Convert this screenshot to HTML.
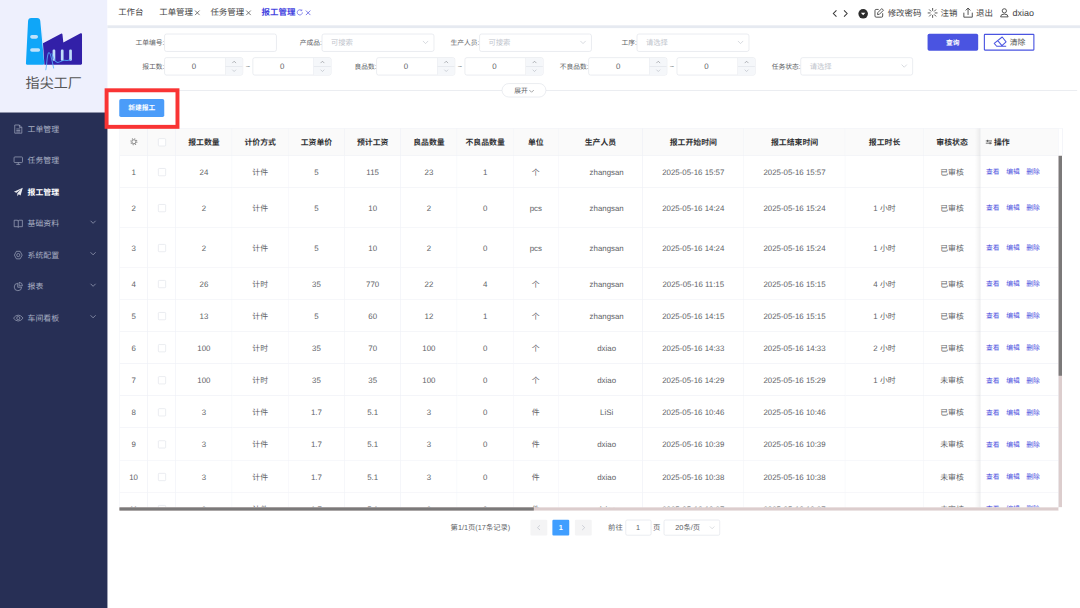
<!DOCTYPE html>
<html lang="zh-CN"><head><meta charset="utf-8"><title>报工管理</title>
<style>
html,body{margin:0;padding:0;width:1080px;height:608px;overflow:hidden;background:#fff}
body{font-family:"Liberation Sans","Noto Sans CJK SC",sans-serif}
#app{text-rendering:geometricPrecision;position:absolute;left:0;top:0;width:1920px;height:1081px;transform:scale(.5625);transform-origin:0 0;background:#fff;color:#606266;font-size:14px;overflow:hidden}
#app *{box-sizing:border-box}
.abs{position:absolute}
svg{display:block;overflow:visible}
/* sidebar */
.side{position:absolute;left:0;top:0;width:191px;height:1081px}
.menu{position:absolute;left:0;top:200px;width:191px;height:881px;background:#272f55}
.logo{position:absolute;left:0;top:0;width:191px;height:200px;background:#eef0fd}
.logo .nm{position:absolute;left:0;width:191px;top:131px;text-align:center;font-size:25px;line-height:36px;color:#555;letter-spacing:0}
.mi{position:absolute;left:0;width:191px;height:56px;line-height:56px;color:#a9afc4;font-size:14px}
.mi .ic{position:absolute;left:24px;top:21px;width:17px;height:17px;opacity:.9}
.mi .tx{position:absolute;left:49px;top:1px;white-space:nowrap}
.mi .ar{position:absolute;left:160px;top:23px;width:11px;height:8px}
.mi.on{color:#fff;font-weight:bold}
/* topbar */
.top{position:absolute;left:191px;top:0;width:1729px;height:45px;background:#fff}
.strip{position:absolute;left:191px;top:45px;width:1729px;height:5px;background:#e6eaf1}
.tab{position:absolute;top:0;height:45px;line-height:44px;font-size:15px;color:#444;white-space:nowrap}
.tab.on{color:#4545e0;font-weight:bold}
.tr{position:absolute;top:1px;height:45px;line-height:46px;font-size:15px;color:#444;white-space:nowrap}
/* form */
.lbl{position:absolute;width:80px;text-align:right;font-size:12px;color:#606266;line-height:32px;height:32px;white-space:nowrap}
.inp{position:absolute;height:32px;border:1px solid #dcdfe6;border-radius:4px;background:#fff;font-size:13px;line-height:30px;color:#c0c4cc}
.inp .ph{position:absolute;left:15px;top:0}
.inp .dn{position:absolute;right:9px;top:11px;width:11px;height:7px}
.num{position:absolute;height:32px;width:139.5px;border:1px solid #dcdfe6;border-radius:4px;background:#fff;font-size:14px;line-height:30px;color:#606266}
.num .v{position:absolute;left:0;top:0;width:103px;text-align:center}
.num .ct{position:absolute;right:0;top:0;width:31px;height:30px;border-left:1px solid #dcdfe6;background:#f5f7fa;border-radius:0 3px 3px 0}
.num .ct i{position:absolute;left:0;top:15px;width:30px;height:1px;background:#dcdfe6}
.num .ct svg{position:absolute;left:11px;width:8.5px;height:5px}
.til{position:absolute;font-size:13px;line-height:32px;color:#606266;width:18px;text-align:center}
.btn{position:absolute;border-radius:3px;text-align:center;white-space:nowrap}
/* table */
.tw{position:absolute;left:212px;top:228px;width:1678px;height:680px;overflow:hidden}
table{margin-left:1px;border-collapse:separate;border-spacing:0;table-layout:fixed;width:1669px;font-size:14px;color:#606266}
th,td{border-right:1px solid #ebeef5;border-bottom:1px solid #ebeef5;text-align:center;padding:0;overflow:hidden;white-space:nowrap}
th{height:49px;padding-bottom:2px;background:#fafafa;color:#303133;font-weight:bold;border-top:1px solid #ebeef5}
td{height:57px;background:#fff;padding-top:1px}
tr.r1 td{height:57px}
tr.h58 td{height:58px}
tr.tall td{height:71px}
.cb{display:inline-block;width:14px;height:14px;border:1px solid #dcdfe6;border-radius:2px;background:#fff;vertical-align:middle;position:relative;top:-1px}
td:nth-child(10){padding-left:22px}
th .cb{top:0}
td.op,th.op{text-align:left;padding-left:10px;font-size:12px}
th.op{font-size:14px;padding-left:9px}
td.op a{color:#4549dd;margin-right:11.7px}
.fx{position:absolute;left:1521px;top:0;width:10px;height:674px;background:linear-gradient(to right,rgba(0,0,0,0),rgba(0,0,0,.06))}
/* pager */
.pg{position:absolute;font-size:13px;color:#606266;line-height:28px;height:28px;white-space:nowrap}
.pb{position:absolute;top:924.4px;width:30px;height:28px;border-radius:2px;background:#f4f4f5;text-align:center;line-height:28px;font-size:13px;font-weight:bold}
</style></head><body>
<div id="app">

<!-- SIDEBAR -->
<div class="side">
 <div class="logo">
  <svg class="abs" style="left:40px;top:28px" width="112" height="100" viewBox="0 0 112 100">
   <path d="M40.5 87 L34 12 L36 40Z" fill="#8fd0fb" opacity=".6"/>
   <path d="M15.5 4 H26 Q31.2 4 31.6 9.5 L38.6 85 Q38.8 87 36.8 87 H8 Q6 87 6.1 85 L9.9 9.5 Q10.3 4 15.5 4Z" fill="#0fa6f8"/>
   <path d="M36.4 48.7 L68.4 31.8 Q70.5 31 71 33 L72.6 47.6 L103.2 31.3 Q105.7 30.3 105.8 33 V85 Q105.8 87 103.8 87 H39Z" fill="#3220a8"/>
   <rect x="13.6" y="34.3" width="14" height="6.4" rx="3.2" fill="#bfe2fb"/>
   <rect x="13.6" y="57.8" width="17.7" height="6.4" rx="3.2" fill="#bfe2fb"/>
   <rect x="53.5" y="60" width="4.8" height="20" rx="2" fill="#bfdcfa"/>
   <rect x="68.2" y="60" width="4.8" height="20" rx="2" fill="#bfdcfa"/>
   <rect x="83" y="60" width="4.8" height="20" rx="2" fill="#bfdcfa"/>
   <path d="M41.5 96 C43.5 86 43.5 70 46.2 66 C49.5 63 52 78 55.4 93 M52.3 67.5 C54.5 75 57.5 83 62.5 83 C67.5 83 70 78.5 75.5 79.3 C80 80 83 78.3 85 78" fill="none" stroke="#55b4ff" stroke-width="1.8" stroke-linecap="round" opacity=".8"/>
  </svg>
  <div class="nm">指尖工厂</div>
 </div>

 <div class="menu"></div>
 <div class="mi" style="top:200px"><svg class="ic" viewBox="0 0 17 17" fill="none" stroke="currentColor" stroke-width="1.3"><path d="M2.2 1.2h8.3l4.3 4.3v10.3h-12.6z M10.5 1.2v4.3h4.3 M5 8.3h7 M5 11h7 M5 13.6h7"/></svg><span class="tx">工单管理</span></div>
 <div class="mi" style="top:256px"><svg class="ic" viewBox="0 0 17 17" fill="none" stroke="currentColor" stroke-width="1.3"><rect x="1" y="2" width="15" height="10" rx="1.5"/><path d="M8.5 12v3 M5 15.3h7"/></svg><span class="tx">任务管理</span></div>
 <div class="mi on" style="top:312px"><svg class="ic" viewBox="0 0 17 17" fill="currentColor"><path d="M16.5 0.8 L0.8 7.8 L5.2 9.6 L13.5 3.6 L6.8 10.6 L6.8 15.8 L9.4 12.2 L12.6 14.6Z"/></svg><span class="tx">报工管理</span></div>
 <div class="mi" style="top:368px"><svg class="ic" viewBox="0 0 17 17" fill="none" stroke="currentColor" stroke-width="1.3"><path d="M1.2 2.5h5.3q2 0 2 2 q0-2 2-2h5.3v11.5h-5.3q-2 0-2 1.2 q0-1.2-2-1.2h-5.3z M8.5 4.5v10.5"/></svg><span class="tx">基础资料</span><svg class="ar" viewBox="0 0 11 8" fill="none" stroke="currentColor" stroke-width="1.2"><path d="M1 1.5l4.5 4.5l4.5-4.5"/></svg></div>
 <div class="mi" style="top:424px"><svg class="ic" viewBox="0 0 17 17" fill="none" stroke="currentColor" stroke-width="1.3"><path d="M5.2 1.8h6.6l3.6 6.7l-3.6 6.7h-6.6l-3.6-6.7z"/><circle cx="8.5" cy="8.5" r="2.8"/></svg><span class="tx">系统配置</span><svg class="ar" viewBox="0 0 11 8" fill="none" stroke="currentColor" stroke-width="1.2"><path d="M1 1.5l4.5 4.5l4.5-4.5"/></svg></div>
 <div class="mi" style="top:480px"><svg class="ic" viewBox="0 0 17 17" fill="none" stroke="currentColor" stroke-width="1.3"><path d="M7.5 2.6a6.6 6.6 0 1 0 7 7h-7z"/><path d="M10 1v6h6a6.2 6.2 0 0 0-6-6z"/></svg><span class="tx">报表</span><svg class="ar" viewBox="0 0 11 8" fill="none" stroke="currentColor" stroke-width="1.2"><path d="M1 1.5l4.5 4.5l4.5-4.5"/></svg></div>
 <div class="mi" style="top:536px"><svg class="ic" viewBox="0 0 17 17" fill="none" stroke="currentColor" stroke-width="1.3"><path d="M0 8.5q3.8-5.2 8.5-5.2t8.5 5.2q-3.8 5.2-8.5 5.2t-8.5-5.2z"/><circle cx="8.5" cy="8.5" r="2.8"/></svg><span class="tx">车间看板</span><svg class="ar" viewBox="0 0 11 8" fill="none" stroke="currentColor" stroke-width="1.2"><path d="M1 1.5l4.5 4.5l4.5-4.5"/></svg></div>
</div>

<!-- TOP BAR -->
<div class="top"></div><div class="strip"></div>
<div class="tab" style="left:210px">工作台</div>
<div class="tab" style="left:283px">工单管理</div><svg class="abs" style="left:346.0px;top:17.5px" width="9.6" height="9.6" viewBox="0 0 10 10" fill="none" stroke="#444" stroke-width="1.3"><path d="M.8 .8l8.4 8.4M9.2 .8l-8.4 8.4"/></svg>
<div class="tab" style="left:374px">任务管理</div><svg class="abs" style="left:436.59999999999997px;top:17.5px" width="9.6" height="9.6" viewBox="0 0 10 10" fill="none" stroke="#444" stroke-width="1.3"><path d="M.8 .8l8.4 8.4M9.2 .8l-8.4 8.4"/></svg>
<div class="tab on" style="left:465px">报工管理</div>
<svg class="abs" style="left:527px;top:16.2px" width="12" height="12" viewBox="0 0 12 12" fill="none" stroke="#4545e0" stroke-width="1.1"><path d="M10.6 6a4.6 4.6 0 1 1-1.6-3.5"/><path d="M9.6 .6v2.4h-2.4" stroke-width="1"/></svg><svg class="abs" style="left:543.0px;top:17.5px" width="9.6" height="9.6" viewBox="0 0 10 10" fill="none" stroke="#4545e0" stroke-width="1.3"><path d="M.8 .8l8.4 8.4M9.2 .8l-8.4 8.4"/></svg>

<svg class="abs" style="left:1479px;top:15.5px" width="32" height="16" viewBox="0 0 32 16" fill="none" stroke="#333" stroke-width="1.8"><path d="M8 2.5l-5.5 5.5l5.5 5.5 M21.5 2.5l5.5 5.5l-5.5 5.5"/></svg>
<svg class="abs" style="left:1525.5px;top:15.5px" width="17" height="17" viewBox="0 0 18 18"><circle cx="9" cy="9" r="9" fill="#2b2b2b"/><path d="M4.8 7h8.4l-4.2 4.6z" fill="#fff"/></svg>
<svg class="abs" style="left:1554px;top:14px" width="18" height="18" viewBox="0 0 18 18" fill="none" stroke="#444" stroke-width="1.6"><path d="M8 2.8h-4.5q-2 0-2 2v9.7q0 2 2 2h9.7q2 0 2-2v-5"/><path d="M13.6 1.2l3 3l-7.2 7.2l-3.4 .5l.5-3.4z"/></svg>
<div class="tr" style="left:1578px">修改密码</div>
<svg class="abs" style="left:1649px;top:14px" width="18" height="18" viewBox="0 0 18 18" fill="none" stroke="#444" stroke-width="1.6" stroke-linecap="round"><path d="M9 1v3.6 M9 13.4v3.6 M1 9h3.6 M13.4 9h3.6 M3.3 3.3l2.6 2.6 M12.1 12.1l2.6 2.6 M3.3 14.7l2.6-2.6 M12.1 5.9l2.6-2.6"/></svg>
<div class="tr" style="left:1672px">注销</div>
<svg class="abs" style="left:1712px;top:13px" width="18" height="19" viewBox="0 0 18 19" fill="none" stroke="#444" stroke-width="1.6"><path d="M1.5 9.5v8h15v-8 M9 13.5v-12 M4.8 5.5l4.2-4.2l4.2 4.2"/></svg>
<div class="tr" style="left:1735px">退出</div>
<svg class="abs" style="left:1777px;top:14px" width="17" height="18" viewBox="0 0 17 18" fill="none" stroke="#444" stroke-width="1.6"><circle cx="8.5" cy="5.3" r="3.8"/><path d="M1.8 16q0-5 6.7-5t6.7 5z"/></svg>
<div class="tr" style="left:1800px;font-size:16px">dxiao</div>

<!-- FORM -->
<div class="lbl" style="left:212.4px;top:59.5px">工单编号:</div><div class="inp" style="left:292.4px;top:59.5px;width:200px"></div>
<div class="lbl" style="left:492.4px;top:59.5px">产成品:</div><div class="inp" style="left:572.4px;top:59.5px;width:200px"><span class="ph">可搜索</span><svg class="dn" viewBox="0 0 11 7" fill="none" stroke="#c0c4cc" stroke-width="1.1"><path d="M.8 .8l4.7 4.7l4.7-4.7"/></svg></div>
<div class="lbl" style="left:772.4px;top:59.5px">生产人员:</div><div class="inp" style="left:852.4px;top:59.5px;width:200px"><span class="ph">可搜索</span><svg class="dn" viewBox="0 0 11 7" fill="none" stroke="#c0c4cc" stroke-width="1.1"><path d="M.8 .8l4.7 4.7l4.7-4.7"/></svg></div>
<div class="lbl" style="left:1052.4px;top:59.5px">工序:</div><div class="inp" style="left:1132.4px;top:59.5px;width:200px"><span class="ph">请选择</span><svg class="dn" viewBox="0 0 11 7" fill="none" stroke="#c0c4cc" stroke-width="1.1"><path d="M.8 .8l4.7 4.7l4.7-4.7"/></svg></div>

<div class="lbl" style="left:212.4px;top:101.7px">报工数:</div>
<div class="num" style="left:292.4px;top:101.7px"><span class="v">0</span><span class="ct"><i></i><svg style="top:5.5px" viewBox="0 0 10 6" fill="none" stroke="#85888e" stroke-width="1.3"><path d="M1 5l4-4l4 4"/></svg><svg style="top:20.5px" viewBox="0 0 10 6" fill="none" stroke="#b4b8c0" stroke-width="1.3"><path d="M1 1l4 4l4-4"/></svg></span></div>
<div class="til" style="left:431.5px;top:101.7px">~</div>
<div class="num" style="left:449.4px;top:101.7px"><span class="v">0</span><span class="ct"><i></i><svg style="top:5.5px" viewBox="0 0 10 6" fill="none" stroke="#85888e" stroke-width="1.3"><path d="M1 5l4-4l4 4"/></svg><svg style="top:20.5px" viewBox="0 0 10 6" fill="none" stroke="#b4b8c0" stroke-width="1.3"><path d="M1 1l4 4l4-4"/></svg></span></div>

<div class="lbl" style="left:589.4px;top:101.7px">良品数:</div>
<div class="num" style="left:669.4px;top:101.7px"><span class="v">0</span><span class="ct"><i></i><svg style="top:5.5px" viewBox="0 0 10 6" fill="none" stroke="#85888e" stroke-width="1.3"><path d="M1 5l4-4l4 4"/></svg><svg style="top:20.5px" viewBox="0 0 10 6" fill="none" stroke="#b4b8c0" stroke-width="1.3"><path d="M1 1l4 4l4-4"/></svg></span></div>
<div class="til" style="left:808.5px;top:101.7px">~</div>
<div class="num" style="left:826.4px;top:101.7px"><span class="v">0</span><span class="ct"><i></i><svg style="top:5.5px" viewBox="0 0 10 6" fill="none" stroke="#85888e" stroke-width="1.3"><path d="M1 5l4-4l4 4"/></svg><svg style="top:20.5px" viewBox="0 0 10 6" fill="none" stroke="#b4b8c0" stroke-width="1.3"><path d="M1 1l4 4l4-4"/></svg></span></div>

<div class="lbl" style="left:966.4px;top:101.7px">不良品数:</div>
<div class="num" style="left:1046.4px;top:101.7px"><span class="v">0</span><span class="ct"><i></i><svg style="top:5.5px" viewBox="0 0 10 6" fill="none" stroke="#85888e" stroke-width="1.3"><path d="M1 5l4-4l4 4"/></svg><svg style="top:20.5px" viewBox="0 0 10 6" fill="none" stroke="#b4b8c0" stroke-width="1.3"><path d="M1 1l4 4l4-4"/></svg></span></div>
<div class="til" style="left:1185.5px;top:101.7px">~</div>
<div class="num" style="left:1203.4px;top:101.7px"><span class="v">0</span><span class="ct"><i></i><svg style="top:5.5px" viewBox="0 0 10 6" fill="none" stroke="#85888e" stroke-width="1.3"><path d="M1 5l4-4l4 4"/></svg><svg style="top:20.5px" viewBox="0 0 10 6" fill="none" stroke="#b4b8c0" stroke-width="1.3"><path d="M1 1l4 4l4-4"/></svg></span></div>

<div class="lbl" style="left:1343.4px;top:101.7px">任务状态:</div><div class="inp" style="left:1423.4px;top:101.7px;width:200px"><span class="ph">请选择</span><svg class="dn" viewBox="0 0 11 7" fill="none" stroke="#c0c4cc" stroke-width="1.1"><path d="M.8 .8l4.7 4.7l4.7-4.7"/></svg></div>

<div class="btn" style="left:1649px;top:60px;width:90px;height:30px;background:#4a54e1;color:#fff;font-size:12px;font-weight:bold;line-height:32px">查询</div>
<div class="btn" style="left:1749px;top:60px;width:90px;height:30px;background:#fff;border:2px solid #4a54e1;border-radius:2px"><svg class="abs" style="left:-2px;top:-2px" width="90" height="30" viewBox="0 0 90 30" fill="none" stroke="#4a54e1" stroke-width="1.8" stroke-linejoin="round"><path d="M32.7 5.8L39.6 14.5L30.8 22.3H22.9L18.5 17Z M24.8 12.1L32.2 21 M22.9 22.4H39.8"/></svg><span class="abs" style="left:44px;top:-2px;font-size:14px;line-height:31px;color:#555">清除</span></div>

<!-- divider + expand -->
<div class="abs" style="left:212px;top:160px;width:1703px;height:1px;background:#dcdfe6"></div>
<div class="abs" style="left:892px;top:148px;width:79px;height:25px;border:1px solid #dcdfe6;border-radius:13px;background:#fff;font-size:12px;line-height:24px;color:#606266;padding-left:21px">展开<svg class="abs" style="left:46.5px;top:9.5px" width="10" height="6" viewBox="0 0 10 6" fill="none" stroke="#606266" stroke-width="1"><path d="M1 1l4 4l4-4"/></svg></div>

<!-- new button + highlight -->
<div class="btn" style="left:212px;top:176px;width:80px;height:32px;background:#4b9cf9;color:#fff;font-size:12px;font-weight:bold;line-height:32px">新建报工</div>

<!-- TABLE -->
<div class="tw">
<div style="height:674px;overflow:hidden">
<table>
<colgroup><col style="width:50px"><col style="width:50px"><col style="width:100px"><col style="width:100px"><col style="width:100px"><col style="width:100px"><col style="width:100px"><col style="width:100px"><col style="width:80px"><col style="width:150px"><col style="width:180px"><col style="width:180px"><col style="width:140px"><col style="width:100px"><col style="width:139px"></colgroup>
<thead><tr><th><svg style="margin:0 auto" width="14" height="14" viewBox="0 0 14 14" fill="none" stroke="#777"><circle cx="7" cy="7" r="3.6" stroke-width="1.5"/><circle cx="7" cy="7" r="5.4" stroke-width="1.8" stroke-dasharray="2.1 2.14" stroke="#8a8a8a"/></svg></th><th><span class="cb"></span></th><th>报工数量</th><th>计价方式</th><th>工资单价</th><th>预计工资</th><th>良品数量</th><th>不良品数量</th><th>单位</th><th>生产人员</th><th>报工开始时间</th><th>报工结束时间</th><th>报工时长</th><th>审核状态</th><th class="op"><svg style="display:inline-block;vertical-align:-1px;margin-right:3px" width="12" height="11" viewBox="0 0 11 11" preserveAspectRatio="none" fill="none" stroke="#333" stroke-width="1.2"><path d="M0.5 3.5h10 M0.5 7.5h10 M3.5 1.5v4 M7.5 5.5v4"/></svg>操作</th></tr></thead>
<tbody>
<tr class="r1"><td>1</td><td><span class="cb"></span></td><td>24</td><td>计件</td><td>5</td><td>115</td><td>23</td><td>1</td><td>个</td><td>zhangsan</td><td>2025-05-16 15:57</td><td>2025-05-16 15:57</td><td></td><td>已审核</td><td class="op"><a>查看</a><a>编辑</a><a>删除</a></td></tr>
<tr class="tall"><td>2</td><td><span class="cb"></span></td><td>2</td><td>计件</td><td>5</td><td>10</td><td>2</td><td>0</td><td>pcs</td><td>zhangsan</td><td>2025-05-16 14:24</td><td>2025-05-16 15:24</td><td>1 小时</td><td>已审核</td><td class="op"><a>查看</a><a>编辑</a><a>删除</a></td></tr>
<tr class="tall"><td>3</td><td><span class="cb"></span></td><td>2</td><td>计件</td><td>5</td><td>10</td><td>2</td><td>0</td><td>pcs</td><td>zhangsan</td><td>2025-05-16 14:24</td><td>2025-05-16 15:24</td><td>1 小时</td><td>已审核</td><td class="op"><a>查看</a><a>编辑</a><a>删除</a></td></tr>
<tr><td>4</td><td><span class="cb"></span></td><td>26</td><td>计时</td><td>35</td><td>770</td><td>22</td><td>4</td><td>个</td><td>zhangsan</td><td>2025-05-16 11:15</td><td>2025-05-16 15:15</td><td>4 小时</td><td>已审核</td><td class="op"><a>查看</a><a>编辑</a><a>删除</a></td></tr>
<tr><td>5</td><td><span class="cb"></span></td><td>13</td><td>计件</td><td>5</td><td>60</td><td>12</td><td>1</td><td>个</td><td>zhangsan</td><td>2025-05-16 14:15</td><td>2025-05-16 15:15</td><td>1 小时</td><td>已审核</td><td class="op"><a>查看</a><a>编辑</a><a>删除</a></td></tr>
<tr><td>6</td><td><span class="cb"></span></td><td>100</td><td>计时</td><td>35</td><td>70</td><td>100</td><td>0</td><td>个</td><td>dxiao</td><td>2025-05-16 14:33</td><td>2025-05-16 14:33</td><td>2 小时</td><td>已审核</td><td class="op"><a>查看</a><a>编辑</a><a>删除</a></td></tr>
<tr><td>7</td><td><span class="cb"></span></td><td>100</td><td>计时</td><td>35</td><td>35</td><td>100</td><td>0</td><td>个</td><td>dxiao</td><td>2025-05-16 14:29</td><td>2025-05-16 15:29</td><td>1 小时</td><td>未审核</td><td class="op"><a>查看</a><a>编辑</a><a>删除</a></td></tr>
<tr><td>8</td><td><span class="cb"></span></td><td>3</td><td>计件</td><td>1.7</td><td>5.1</td><td>3</td><td>0</td><td>件</td><td>LiSi</td><td>2025-05-16 10:46</td><td>2025-05-16 10:46</td><td></td><td>已审核</td><td class="op"><a>查看</a><a>编辑</a><a>删除</a></td></tr>
<tr class="h58"><td>9</td><td><span class="cb"></span></td><td>3</td><td>计件</td><td>1.7</td><td>5.1</td><td>3</td><td>0</td><td>件</td><td>dxiao</td><td>2025-05-16 10:39</td><td>2025-05-16 10:39</td><td></td><td>未审核</td><td class="op"><a>查看</a><a>编辑</a><a>删除</a></td></tr>
<tr><td>10</td><td><span class="cb"></span></td><td>3</td><td>计件</td><td>1.7</td><td>5.1</td><td>3</td><td>0</td><td>件</td><td>dxiao</td><td>2025-05-16 10:38</td><td>2025-05-16 10:38</td><td></td><td>未审核</td><td class="op"><a>查看</a><a>编辑</a><a>删除</a></td></tr>
<tr><td>11</td><td><span class="cb"></span></td><td>3</td><td>计件</td><td>1.7</td><td>5.1</td><td>3</td><td>0</td><td>件</td><td>dxiao</td><td>2025-05-16 10:37</td><td>2025-05-16 10:37</td><td></td><td>未审核</td><td class="op"><a>查看</a><a>编辑</a><a>删除</a></td></tr>
</tbody></table>
</div>
<div class="fx"></div>
<!-- scrollbars -->
<div class="abs" style="left:0;top:0;width:1px;height:674px;background:#ebeef5"></div>
<div class="abs" style="left:1670px;top:0;width:7px;height:49px;background:#fff;border-top:1px solid #ebeef5;border-right:1px solid #ebeef5"></div>
<div class="abs" style="left:1670px;top:49px;width:6px;height:625px;background:#dccdcd"></div>
<div class="abs" style="left:1670px;top:49px;width:6px;height:391px;background:#7b7979"></div>
<div class="abs" style="left:0;top:674px;width:1670px;height:6px;background:#dccdcd"></div>
<div class="abs" style="left:0;top:674px;width:737px;height:6px;background:#7b7979"></div>
<div class="abs" style="left:1670px;top:674px;width:7px;height:6px;background:#fff"></div>
</div>

<div class="abs" style="left:186.2px;top:157px;width:132.8px;height:72px;border:7px solid #f93434"></div>

<!-- PAGER -->
<div class="pg" style="left:801px;top:924.4px">第1/1页(17条记录)</div>
<div class="pb" style="left:942.8px;color:#c0c4cc"><svg style="margin:9px auto 0" width="7" height="10" viewBox="0 0 7 10" fill="none" stroke="#c0c4cc" stroke-width="1.3"><path d="M6 .8l-4.5 4.2l4.5 4.2"/></svg></div>
<div class="pb" style="left:982px;background:#409eff;color:#fff">1</div>
<div class="pb" style="left:1022px"><svg style="margin:9px auto 0" width="7" height="10" viewBox="0 0 7 10" fill="none" stroke="#c0c4cc" stroke-width="1.3"><path d="M1 .8l4.5 4.2l-4.5 4.2"/></svg></div>
<div class="pg" style="left:1081px;top:924.4px">前往</div>
<div class="abs" style="left:1111.5px;top:924.4px;width:46px;height:28px;border:1px solid #dcdfe6;border-radius:3px;font-size:13px;line-height:26px;text-align:center;color:#606266">1</div>
<div class="pg" style="left:1161px;top:924.4px">页</div>
<div class="abs" style="left:1179.5px;top:924.4px;width:100px;height:28px;border:1px solid #dcdfe6;border-radius:3px;font-size:13px;line-height:26px;color:#606266;padding-left:20px">20条/页<svg class="abs" style="right:8px;top:10px" width="10" height="6" viewBox="0 0 10 6" fill="none" stroke="#c0c4cc" stroke-width="1"><path d="M1 1l4 4l4-4"/></svg></div>

</div>
</body></html>
